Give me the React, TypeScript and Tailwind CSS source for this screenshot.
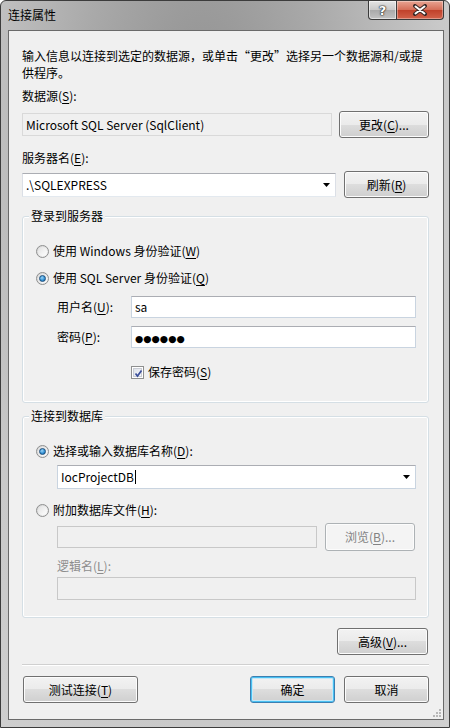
import React from "react";

const FONT = '"Noto Sans CJK SC", "Noto Sans", sans-serif';

function U({ children }: { children: React.ReactNode }) {
  return <span className="underline underline-offset-[2px] decoration-1">{children}</span>;
}

function Btn({
  children,
  w,
  h = 27,
  def = false,
  disabled = false,
}: {
  children: React.ReactNode;
  w: number;
  h?: number;
  def?: boolean;
  disabled?: boolean;
}) {
  let cls =
    "flex items-center justify-center rounded-[3px] border text-[12px] shrink-0 ";
  if (disabled) {
    cls +=
      "border-[#adb2b5] bg-[#f4f4f4] text-[#838383] shadow-[inset_0_0_0_1px_#fcfcfc]";
  } else if (def) {
    cls +=
      "border-[#3c7fb1] text-black bg-[linear-gradient(to_bottom,#f2f2f2_0%,#ebebeb_50%,#dddddd_50%,#cfcfcf_100%)] shadow-[inset_0_0_0_1px_#48c0f2,inset_0_0_0_2px_#c6e8f8]";
  } else {
    cls +=
      "border-[#707070] text-black bg-[linear-gradient(to_bottom,#f2f2f2_0%,#ebebeb_50%,#dddddd_50%,#cfcfcf_100%)] shadow-[inset_0_0_0_1px_#fcfcfc]";
  }
  return (
    <div className={cls} style={{ width: w, height: h }}>
      <span className="leading-none">{children}</span>
    </div>
  );
}

function Radio({ checked }: { checked?: boolean }) {
  return (
    <div className="relative w-[13px] h-[13px] rounded-full border border-[#8e8f8f] bg-[linear-gradient(135deg,#d4d4d4,#f6f6f6)] shrink-0 flex items-center justify-center">
      <div className="w-[9px] h-[9px] rounded-full bg-[linear-gradient(135deg,#e2e2e2,#ffffff)] flex items-center justify-center">
        {checked && (
          <div className="w-[7px] h-[7px] rounded-full border border-[#1d4f7c] bg-[radial-gradient(circle_at_40%_35%,#9cd5f7,#2f8ed3_60%,#1a5c95)]" />
        )}
      </div>
    </div>
  );
}

function Check() {
  return (
    <div className="w-[13px] h-[13px] border border-[#8e8f8f] bg-white shrink-0 p-[1px]">
      <div className="w-full h-full border border-[#c9ccd4] bg-[linear-gradient(135deg,#dfe3ea,#f6f7fa)] relative">
        <svg viewBox="0 0 9 9" className="absolute left-0 top-0 w-[9px] h-[9px]">
          <path d="M1.5 4.5 L3.5 7 L7.5 1.5" fill="none" stroke="#3b4f9a" strokeWidth="1.7" />
        </svg>
      </div>
    </div>
  );
}

function TextBox({
  w,
  h = 22,
  children,
  bg = "bg-white",
  border = "border-[#abadb3] border-l-[#dbdfe6] border-r-[#dbdfe6] border-b-[#e3e9ef]",
  combo = false,
}: {
  w: number;
  h?: number;
  children?: React.ReactNode;
  bg?: string;
  border?: string;
  combo?: boolean;
}) {
  return (
    <div
      className={`flex items-center border ${border} ${bg} pl-[3px] pr-[5px] text-[12px] text-black shrink-0`}
      style={{ width: w, height: h }}
    >
      <div className="flex-1 leading-none whitespace-nowrap">{children}</div>
      {combo && (
        <svg width="7" height="4" viewBox="0 0 7 4">
          <path d="M0 0 H7 L3.5 4 Z" fill="#000" />
        </svg>
      )}
    </div>
  );
}

function GroupBox({
  label,
  h,
  children,
}: {
  label: string;
  h: number;
  children: React.ReactNode;
}) {
  return (
    <div
      className="relative w-[407px] rounded-[3px] border border-[#d5dfe5] shadow-[inset_0_0_0_1px_#ffffff]"
      style={{ height: h }}
    >
      <div className="absolute left-[6px] top-[-10px] px-[2px] bg-[#f0f0f0] text-[12px] leading-[18px] text-black">
        {label}
      </div>
      {children}
    </div>
  );
}

const BLUE_BORDER =
  "border-[#abadb3] border-l-[#c9d4e0] border-r-[#c9d4e0] border-b-[#c9d4e0]";

export default function App() {
  return (
    <div
      className="w-[450px] h-[728px] relative overflow-hidden rounded-t-[6px] border border-[#3c3c3c] bg-[radial-gradient(ellipse_at_45%_20%,#8e8e8e_0%,#a9a9a9_35%,#c9c9c9_70%,#d0d0d0_100%)] flex flex-col"
      style={{ fontFamily: FONT }}
    >
      {/* title bar */}
      <div className="h-[29px] flex items-start shrink-0 relative">
        <div className="pl-[7px] pt-[5px] text-[12px] leading-[18px] text-black">连接属性</div>
        <div className="ml-auto mr-[5px] flex">
          <div className="w-[29px] h-[19px] border border-[#3a3a3a] border-t-0 rounded-bl-[4px] bg-[linear-gradient(to_bottom,#e4e4e4_0%,#c8c8c8_50%,#a9a9a9_50%,#c2c2c2_100%)] shadow-[inset_0_0_0_1px_rgba(255,255,255,0.5)] flex items-center justify-center">
            <span className="text-white font-bold text-[13px] leading-none [text-shadow:0_0_1px_#222,0_0_1px_#222,0_0_2px_#222]" style={{ fontFamily: '"DejaVu Sans", sans-serif' }}>?</span>
          </div>
          <div className="w-[47px] h-[19px] border border-[#3a3a3a] border-t-0 border-l-0 rounded-br-[4px] bg-[linear-gradient(to_bottom,#e8a493_0%,#d46d57_50%,#c0402a_50%,#d2624a_100%)] shadow-[inset_0_0_0_1px_rgba(255,255,255,0.35)] flex items-center justify-center">
            <svg width="16" height="12" viewBox="0 0 16 12">
              <path d="M3 2 L13 10 M13 2 L3 10" stroke="#3a2a28" strokeWidth="4" strokeLinecap="round" />
              <path d="M3.5 2.5 L12.5 9.5 M12.5 2.5 L3.5 9.5" stroke="#ffffff" strokeWidth="2" strokeLinecap="round" />
            </svg>
          </div>
        </div>
      </div>

      {/* client area */}
      <div className="ml-[7px] mr-[5px] h-[690px] border border-[#6a6a6a] bg-[#f0f0f0] pl-[13px] pr-[14px] text-[12px] text-black flex flex-col shrink-0">
        <div className="pt-[16px] leading-[17px]">
          输入信息以连接到选定的数据源，或单击“更改”选择另一个数据源和/或提
          <br />
          供程序。
        </div>

        <div className="mt-[6px] h-[18px] leading-[18px]">
          数据源(<U>S</U>):
        </div>
        <div className="mt-[6px] flex items-center justify-between h-[27px]">
          <TextBox w={310} h={23} bg="bg-[#f0f0f0]" border="border-[#d9d9d9]">
            Microsoft SQL Server (SqlClient)
          </TextBox>
          <Btn w={90}>
            更改(<U>C</U>)...
          </Btn>
        </div>

        <div className="mt-[11px] h-[18px] leading-[18px]">
          服务器名(<U>E</U>):
        </div>
        <div className="mt-[4px] flex items-center justify-between h-[27px]">
          <TextBox w={314} h={24} combo>
            .\SQLEXPRESS
          </TextBox>
          <Btn w={85} h={27}>
            刷新(<U>R</U>)
          </Btn>
        </div>

        <div className="mt-[18px]">
          <GroupBox label="登录到服务器" h={187}>
            <div className="pl-[13px] pt-[25px] flex flex-col">
              <div className="h-[18px] flex items-center gap-[4px]">
                <Radio />
                <span>
                  使用 Windows 身份验证(<U>W</U>)
                </span>
              </div>
              <div className="mt-[9px] h-[18px] flex items-center gap-[4px]">
                <Radio checked />
                <span>
                  使用 SQL Server 身份验证(<U>Q</U>)
                </span>
              </div>
              <div className="mt-[9px] h-[22px] flex items-center">
                <span className="w-[95px] shrink-0 pl-[21px] whitespace-nowrap">
                  用户名(<U>U</U>):
                </span>
                <TextBox w={285} h={22} border={BLUE_BORDER}>
                  sa
                </TextBox>
              </div>
              <div className="mt-[8px] h-[22px] flex items-center">
                <span className="w-[95px] shrink-0 pl-[21px] whitespace-nowrap">
                  密码(<U>P</U>):
                </span>
                <TextBox w={285} h={22} border={BLUE_BORDER}>
                  <span className="text-[9.5px] leading-none" style={{ fontFamily: '"DejaVu Sans", sans-serif' }}>●●●●●●</span>
                </TextBox>
              </div>
              <div className="mt-[17px] h-[14px] flex items-center gap-[4px] pl-[95px]">
                <Check />
                <span>
                  保存密码(<U>S</U>)
                </span>
              </div>
            </div>
          </GroupBox>
        </div>

        <div className="mt-[13px]">
          <GroupBox label="连接到数据库" h={202}>
            <div className="pl-[13px] pt-[25px] flex flex-col">
              <div className="h-[18px] flex items-center gap-[4px]">
                <Radio checked />
                <span>
                  选择或输入数据库名称(<U>D</U>):
                </span>
              </div>
              <div className="mt-[5px] pl-[21px]">
                <TextBox w={359} h={24} combo border={BLUE_BORDER}>
                  <span className="inline-flex items-center">
                    IocProjectDB
                    <span className="inline-block w-[1px] h-[14px] bg-black ml-[1px]" />
                  </span>
                </TextBox>
              </div>
              <div className="mt-[12px] h-[18px] flex items-center gap-[4px]">
                <Radio />
                <span>
                  附加数据库文件(<U>H</U>):
                </span>
              </div>
              <div className="mt-[4px] pl-[21px] flex items-center h-[28px] gap-[8px]">
                <TextBox w={260} h={22} bg="bg-[#f0f0f0]" border="border-[#c8c8c8]" />
                <Btn w={90} h={28} disabled>
                  浏览(<U>B</U>)...
                </Btn>
              </div>
              <div className="mt-[6px] pl-[21px] h-[18px] leading-[18px] text-[#8d8d8d]">
                逻辑名(<U>L</U>):
              </div>
              <div className="mt-[2px] pl-[21px]">
                <TextBox w={359} h={23} bg="bg-[#f0f0f0]" border="border-[#c8c8c8]" />
              </div>
            </div>
          </GroupBox>
        </div>

        <div className="mt-[10px] flex justify-end pr-[1px]">
          <Btn w={91} h={27}>
            高级(<U>V</U>)...
          </Btn>
        </div>

        <div className="mt-[9px] h-[2px] w-[407px] border-t border-[#d0d0d0] border-b border-b-white" />

        <div className="mt-[10px] flex items-center">
          <div className="pl-[1px]">
            <Btn w={115} h={27}>
              测试连接(<U>T</U>)
            </Btn>
          </div>
          <div className="ml-auto flex gap-[9px]">
            <Btn w={85} h={27} def>
              确定
            </Btn>
            <Btn w={85} h={27}>
              取消
            </Btn>
          </div>
        </div>

        <div className="mt-auto mb-[2px] self-end mr-[-12px] w-[10px] h-[10px] relative">
          <svg width="10" height="10" viewBox="0 0 10 10" className="absolute right-0 bottom-0">
            {[
              [8, 2],
              [5, 5],
              [8, 5],
              [2, 8],
              [5, 8],
              [8, 8],
            ].map(([x, y], i) => (
              <rect key={i} x={x} y={y} width="2" height="2" fill="#b8b8b8" />
            ))}
          </svg>
        </div>
      </div>
    </div>
  );
}
